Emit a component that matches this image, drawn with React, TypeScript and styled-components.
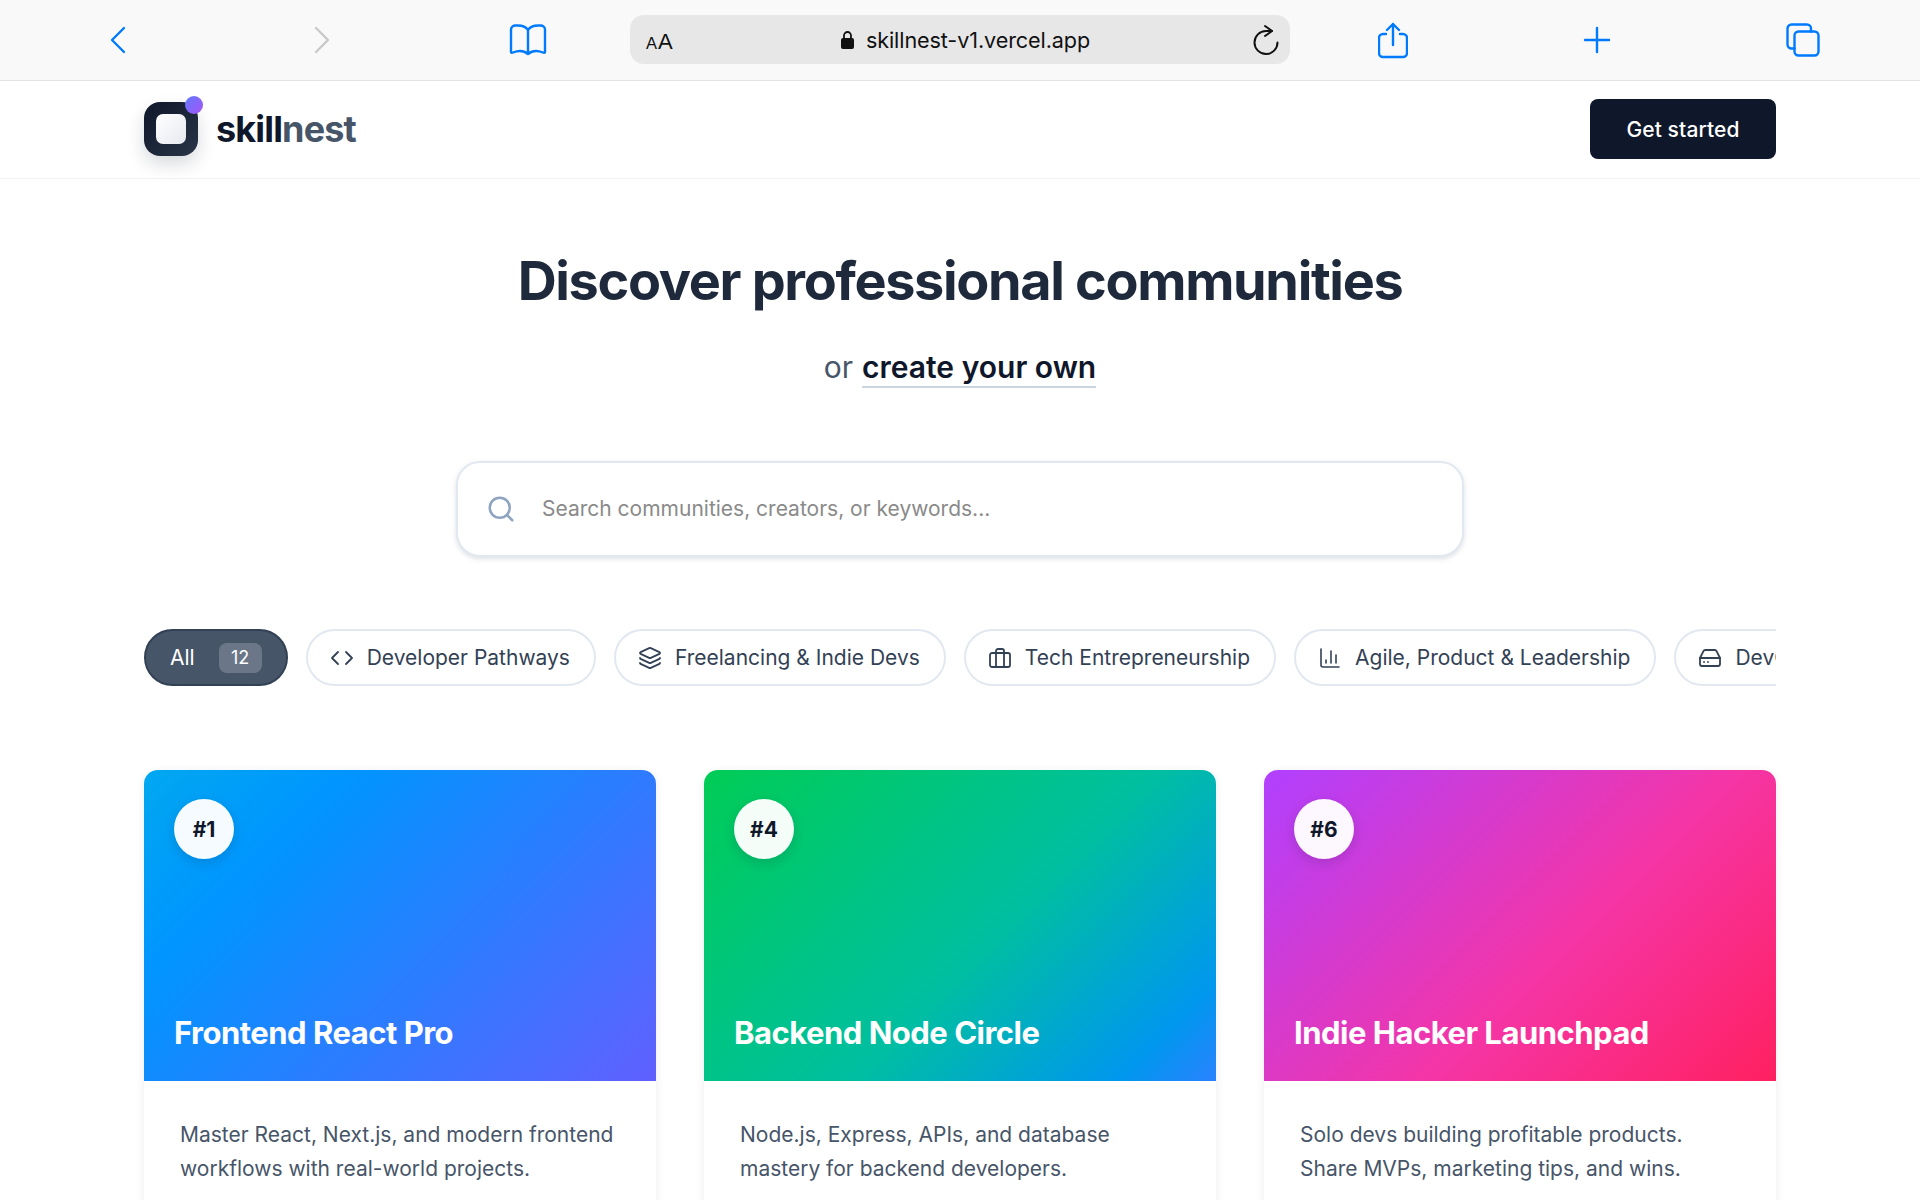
import React from 'react';
import styled, { createGlobalStyle } from 'styled-components';
import { Code, Layers, ChartColumn, HardDrive, Search } from 'lucide-react';

const Global = createGlobalStyle`
  html, body { margin: 0; padding: 0; background: #fff; overflow: hidden; }
  * { box-sizing: border-box; }
  body { font-family: Inter, "Liberation Sans", sans-serif; -webkit-font-smoothing: antialiased; }
`;
const Page = styled.div`height: 1200px; overflow: hidden; background: #fff;`;
const Toolbar = styled.div`
  height: 81px; background: #f9f9f9; border-bottom: 1px solid #e2e2e2;
  display: flex; align-items: center; padding: 0 0 0 16px; flex-shrink: 0;
`;
const ToolSlot = styled.div<{ $w?: number }>`
  width: ${p => p.$w ?? 204}px; height: 50px; display: flex; align-items: center; justify-content: center; flex-shrink: 0;
`;
const Address = styled.div`
  width: 660px; height: 49px; margin: -2px 1px 0 -1px; border-radius: 14px; background: #e7e7e7;
  display: flex; align-items: center; justify-content: space-between; padding: 2px 10px 0 16px;
  color: #111; flex-shrink: 0;
`;
const Aa = styled.div`display: flex; align-items: baseline; gap: 1px; font-family: "Liberation Sans", sans-serif; width: 32px; line-height: 1; padding-top: 3px;`;
const AaSmall = styled.span`font-size: 16.5px;`;
const AaBig = styled.span`font-size: 22px;`;
const Url = styled.div`display: flex; align-items: center; gap: 12px; font-size: 21.6px; letter-spacing: -0.1px; margin-left: 1px;`;

const Header = styled.header`
  height: 98px; border-bottom: 1px solid #f1f3f6; display: flex; align-items: center;
  justify-content: space-between; padding: 0 144px 2px;
`;
const Brand = styled.div`display: flex; align-items: center; gap: 18px;`;
const LogoMark = styled.div`
  position: relative; width: 54px; height: 54px; border-radius: 16px;
  background: linear-gradient(135deg, #0f172a, #293548);
  box-shadow: 0 8px 18px rgba(15, 23, 42, 0.16);
  display: flex; align-items: center; justify-content: center;
`;
const LogoInner = styled.div`width: 30px; height: 30px; border-radius: 7px; background: linear-gradient(135deg, #ffffff, #e6e9ef);`;
const LogoDot = styled.div`
  position: absolute; top: -6px; right: -5px; width: 18px; height: 18px; border-radius: 50%;
  background: linear-gradient(135deg, #5f78ff, #a855f7);
`;
const Word = styled.div`font-size: 36px; font-weight: 700; letter-spacing: -0.85px; color: #0f172a; line-height: 1;`;
const WordLight = styled.span`color: #475569;`;
const CTA = styled.button`
  width: 186px; height: 60px; border: 0; border-radius: 8px; background: #0f172a; color: #fff; padding: 2px 0 0;
  font: 500 21px Inter, sans-serif; letter-spacing: 0.1px;
`;

const Hero = styled.section`display: flex; flex-direction: column; align-items: center; padding-top: 68px;`;
const Title = styled.h1`margin: 0; font-size: 54px; line-height: 68px; font-weight: 700; letter-spacing: -1.35px; color: #1e293b;`;
const Sub = styled.p`margin: 31px 0 0; height: 44px; font-size: 30px; line-height: 42px; color: #475569; display: flex; align-items: baseline; gap: 9px;`;
const SubLink = styled.span`color: #0f172a; font-weight: 600; border-bottom: 2px solid #cbd5e1; line-height: 39px; height: 40px;`;

const SearchBox = styled.div`
  width: 1008px; height: 96px; margin-top: 71px; border: 2px solid #e2e8f0; border-radius: 24px;
  background: #fff; box-shadow: 0 2px 5px rgba(100, 116, 139, 0.22);
  display: flex; align-items: center; gap: 26px; padding: 0 28px 1px;
`;
const Placeholder = styled.span`font-size: 21px; color: #8a8a8a;`;

const Chips = styled.div`
  margin: 72px 144px 0; display: flex; gap: 18px; overflow: hidden; height: 57px;
`;
const Chip = styled.div<{ $active?: boolean }>`
  flex-shrink: 0; height: 57px; border-radius: 29px; display: flex; align-items: center; gap: 13px;
  padding: ${p => (p.$active ? '0 24px' : '0 24px 0 22px')}; font-size: 21px; white-space: nowrap;
  color: ${p => (p.$active ? '#fff' : '#334155')};
  background: ${p => (p.$active ? '#475569' : '#fff')};
  border: 2px solid ${p => (p.$active ? '#334155' : '#e2e8f0')};
`;
const Count = styled.span`
  width: 43px; height: 30px; border-radius: 8px; background: #6b7789; color: #fff;
  font-size: 18px; display: flex; align-items: center; justify-content: center; margin-left: 11px;
`;

const Grid = styled.div`
  margin: 84px 144px 0; display: grid; grid-template-columns: repeat(3, 1fr); gap: 48px;
`;
const Card = styled.article`
  border-radius: 14px; background: #fff; overflow: hidden; height: 500px;
  box-shadow: 0 2px 10px rgba(15, 23, 42, 0.08);
`;
const Cover = styled.div<{ $g: string }>`
  height: 311px; background: ${p => p.$g}; padding: 29px 30px 28px; display: flex; flex-direction: column;
  justify-content: space-between; align-items: flex-start;
`;
const Rank = styled.div`
  width: 60px; height: 60px; border-radius: 50%; background: rgba(255, 255, 255, 0.96);
  display: flex; align-items: center; justify-content: center; font-size: 21px; font-weight: 700;
  color: #0f172a; box-shadow: 0 4px 12px rgba(15, 23, 42, 0.15);
`;
const CardTitle = styled.h2`margin: 0; font-size: 31px; line-height: 40px; font-weight: 700; color: #fff; letter-spacing: -0.5px;`;
const CardBody = styled.div`padding: 37px 36px;`;
const Desc = styled.p`margin: 0; font-size: 21px; line-height: 33.6px; color: #475569;`;

const blue = '#007aff';
const Svg: React.FC<{ w: number; h: number; vb: string; children: React.ReactNode }> = ({ w, h, vb, children }) => (
  <svg width={w} height={h} viewBox={vb} fill="none" stroke={blue} strokeWidth={2.4} strokeLinecap="round" strokeLinejoin="round">
    {children}
  </svg>
);
const Briefcase = () => (
  <svg width="24" height="24" viewBox="0 0 24 24" fill="none" stroke="#334155" strokeWidth="1.8" strokeLinejoin="round">
    <rect x="2" y="7" width="20" height="14" rx="2" />
    <path d="M8 21V5a2 2 0 0 1 2-2h4a2 2 0 0 1 2 2v16" />
  </svg>
);

const cats = [
  { label: 'Developer Pathways', icon: <Code size={24} strokeWidth={1.8} /> },
  { label: 'Freelancing & Indie Devs', icon: <Layers size={24} strokeWidth={1.8} /> },
  { label: 'Tech Entrepreneurship', icon: <Briefcase /> },
  { label: 'Agile, Product & Leadership', icon: <ChartColumn size={24} strokeWidth={1.6} /> },
  { label: 'DevOps & Cloud', icon: <HardDrive size={24} strokeWidth={1.8} /> },
];
const cards = [
  { rank: '#1', title: 'Frontend React Pro', g: 'linear-gradient(135deg, #00a8f0 0%, #0095ff 25%, #6060ff 100%)', d: 'Master React, Next.js, and modern frontend workflows with real-world projects.' },
  { rank: '#4', title: 'Backend Node Circle', g: 'linear-gradient(135deg, #00cc55 0%, #00bfa0 55%, #0097ee 88%, #2a82ff 100%)', d: 'Node.js, Express, APIs, and database mastery for backend developers.' },
  { rank: '#6', title: 'Indie Hacker Launchpad', g: 'linear-gradient(135deg, #b040ff 0%, #f535a5 58%, #ff2060 100%)', d: 'Solo devs building profitable products. Share MVPs, marketing tips, and wins.' },
];

export default function App() {
  return (
    <Page>
      <Global />
      <Toolbar>
        <ToolSlot><Svg w={18} h={30} vb="0 0 18 30"><path d="M15 3 3 15l12 12" /></Svg></ToolSlot>
        <ToolSlot><svg width="18" height="30" viewBox="0 0 18 30" fill="none" stroke="#c9c9c9" strokeWidth="2.4" strokeLinecap="round" strokeLinejoin="round"><path d="M3 3l12 12L3 27" /></svg></ToolSlot>
        <ToolSlot $w={207}><Svg w={38} h={32} vb="0 0 38 32"><path d="M19 6C17 3 13 1.500 9 1.500H6.500C4 1.500 2 3 2 5.500V28C2 29 3 29 4 28.500C9 26.500 15 26.500 19 30C23 26.500 29 26.500 34 28.500C35 29 36 29 36 28V5.500C36 3 34 1.500 31.500 1.500H29C25 1.500 21 3 19 6ZM19 6V30" /></Svg></ToolSlot>
        <Address>
          <Aa><AaSmall>A</AaSmall><AaBig>A</AaBig></Aa>
          <Url>
            <svg width="13" height="18" viewBox="0 0 13 18"><rect x="0" y="7" width="13" height="11" rx="2" fill="#111" /><path d="M3 8V4.500a3.500 3.500 0 0 1 7 0V8" fill="none" stroke="#111" strokeWidth="1.800" /></svg>
            skillnest-v1.vercel.app
          </Url>
          <svg width="28" height="32" viewBox="0 0 28 32" fill="none" stroke="#111" strokeWidth="2" strokeLinecap="round" strokeLinejoin="round"><path d="M20 7H14A11.500 11.500 0 1 0 25.500 18.500" /><path d="M13 2l7 5-7 5" /></svg>
        </Address>
        <ToolSlot><Svg w={30} h={37} vb="0 0 30 37"><path d="M8 12H5a4 4 0 0 0-4 4v15a4 4 0 0 0 4 4h20a4 4 0 0 0 4-4V16a4 4 0 0 0-4-4h-3M15 23V2M9 8l6-6 6 6" /></Svg></ToolSlot>
        <ToolSlot><Svg w={30} h={30} vb="0 0 30 30"><path d="M15 3v24M3 15h24" /></Svg></ToolSlot>
        <ToolSlot $w={207}><Svg w={34} h={34} vb="0 0 34 34"><rect x="8.500" y="8.500" width="24" height="24" rx="4" /><path d="M8.500 25.500H5.500a4 4 0 0 1-4-4V5.500a4 4 0 0 1 4-4H21a4 4 0 0 1 4 4v3" /></Svg></ToolSlot>
      </Toolbar>
      <Header>
        <Brand>
          <LogoMark><LogoInner /><LogoDot /></LogoMark>
          <Word>skill<WordLight>nest</WordLight></Word>
        </Brand>
        <CTA>Get started</CTA>
      </Header>
      <Hero>
        <Title>Discover professional communities</Title>
        <Sub>or <SubLink>create your own</SubLink></Sub>
        <SearchBox>
          <Search size={30} color="#8ea3bf" strokeWidth={2} />
          <Placeholder>Search communities, creators, or keywords...</Placeholder>
        </SearchBox>
      </Hero>
      <Chips>
        <Chip $active>All<Count>12</Count></Chip>
        {cats.map(c => <Chip key={c.label}>{c.icon}{c.label}</Chip>)}
      </Chips>
      <Grid>
        {cards.map(c => (
          <Card key={c.rank}>
            <Cover $g={c.g}>
              <Rank>{c.rank}</Rank>
              <CardTitle>{c.title}</CardTitle>
            </Cover>
            <CardBody><Desc>{c.d}</Desc></CardBody>
          </Card>
        ))}
      </Grid>
    </Page>
  );
}
